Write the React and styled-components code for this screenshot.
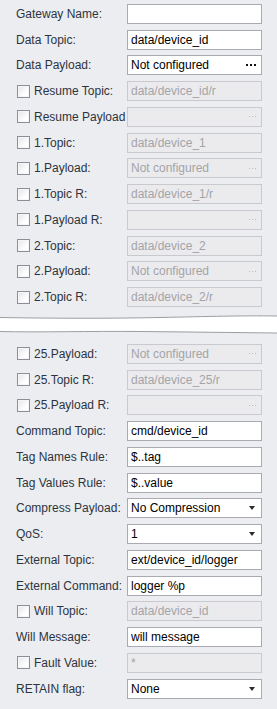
import React from "react";
import styled, { createGlobalStyle } from "styled-components";

const GlobalStyle = createGlobalStyle`
  html, body {
    margin: 0;
    padding: 0;
    background: #ecedf1;
  }
  body {
    font-family: "Liberation Sans", Arial, sans-serif;
    font-size: 12px;
  }
`;

const Page = styled.div`
  width: 277px;
  min-height: 709px;
  padding-top: 1px;
  box-sizing: border-box;
  background: #ecedf1;
`;

const Row = styled.div`
  display: grid;
  grid-template-columns: 127px 135px;
  align-items: center;
  height: 25.75px;
`;

const LabelCell = styled.label`
  display: flex;
  align-items: center;
  padding-left: ${(p) => (p.$check ? "17px" : "16px")};
  color: #2c3440;
  white-space: nowrap;
  overflow: hidden;
`;

const Checkbox = styled.span`
  width: 13px;
  height: 13px;
  box-sizing: border-box;
  margin-right: 4px;
  flex: none;
  border: 1px solid #8d8e98;
  background: linear-gradient(135deg, #e4e5ea 0%, #ffffff 70%);
  box-shadow: inset 0 0 0 1px #f6f6f8;
`;

const Field = styled.div`
  display: flex;
  align-items: center;
  height: 20px;
  box-sizing: border-box;
  padding: 0 3px;
  border: 1px solid ${(p) => (p.$disabled ? "#c9cacf" : "#a9aab2")};
  background: ${(p) => (p.$disabled ? "#ebebee" : "#ffffff")};
  color: ${(p) => (p.$disabled ? "#a3a4a8" : "#000000")};
  white-space: nowrap;
  overflow: hidden;
`;

const Value = styled.span`
  flex: 1;
  overflow: hidden;
`;

const Dots = styled.span`
  flex: none;
  display: flex;
  gap: ${(p) => (p.$disabled ? "2px" : "2px")};
  margin-right: 2px;
  align-self: center;

  i {
    display: block;
    width: ${(p) => (p.$disabled ? "1px" : "2px")};
    height: ${(p) => (p.$disabled ? "1px" : "2px")};
    background: ${(p) => (p.$disabled ? "#b9bac0" : "#111111")};
  }
`;

const Arrow = styled.span`
  flex: none;
  width: 0;
  height: 0;
  margin-right: 3px;
  border-left: 3.5px solid transparent;
  border-right: 3.5px solid transparent;
  border-top: 4px solid #2a2a33;
`;

const Break = styled.div`
  height: 31px;
  svg {
    display: block;
  }
`;

const topRows = [
  { label: "Gateway Name:", value: "" },
  { label: "Data Topic:", value: "data/device_id" },
  { label: "Data Payload:", value: "Not configured", dots: true },
  { label: "Resume Topic:", value: "data/device_id/r", check: true },
  { label: "Resume Payload", value: "", check: true, dots: true },
  { label: "1.Topic:", value: "data/device_1", check: true },
  { label: "1.Payload:", value: "Not configured", check: true, dots: true },
  { label: "1.Topic R:", value: "data/device_1/r", check: true },
  { label: "1.Payload R:", value: "", check: true, dots: true },
  { label: "2.Topic:", value: "data/device_2", check: true },
  { label: "2.Payload:", value: "Not configured", check: true, dots: true },
  { label: "2.Topic R:", value: "data/device_2/r", check: true },
];

const bottomRows = [
  { label: "25.Payload:", value: "Not configured", check: true, dots: true },
  { label: "25.Topic R:", value: "data/device_25/r", check: true },
  { label: "25.Payload R:", value: "", check: true, dots: true },
  { label: "Command Topic:", value: "cmd/device_id" },
  { label: "Tag Names Rule:", value: "$..tag" },
  { label: "Tag Values Rule:", value: "$..value" },
  { label: "Compress Payload:", value: "No Compression", select: true },
  { label: "QoS:", value: "1", select: true },
  { label: "External Topic:", value: "ext/device_id/logger" },
  { label: "External Command:", value: "logger %p" },
  { label: "Will Topic:", value: "data/device_id", check: true },
  { label: "Will Message:", value: "will message" },
  { label: "Fault Value:", value: "*", check: true },
  { label: "RETAIN flag:", value: "None", select: true },
];

const FormRow = ({ label, value, check, dots, select }) => {
  // rows with a checkbox are shown unchecked, so their field is disabled
  const disabled = !!check;
  return (
    <Row>
      <LabelCell $check={check}>
        {check && <Checkbox />}
        {label}
      </LabelCell>
      <Field $disabled={disabled}>
        <Value>{value}</Value>
        {dots && (
          <Dots $disabled={disabled}>
            <i />
            <i />
            <i />
          </Dots>
        )}
        {select && <Arrow />}
      </Field>
    </Row>
  );
};

const TornEdge = () => (
  <Break>
    <svg width="277" height="31" viewBox="0 0 277 31">
      <path
        d="M0 7.5 C60 8.5 110 8.5 160 7.5 S240 5.5 277 6 L277 23 C230 22.5 190 21 140 21.5 S40 22.5 0 21.5 Z"
        fill="#ffffff"
      />
      <path
        d="M0 7.5 C60 8.5 110 8.5 160 7.5 S240 5.5 277 6"
        fill="none"
        stroke="#9d9ea4"
        strokeWidth="1"
      />
      <path
        d="M0 21.5 C40 22.5 90 21 140 21.5 S230 22.5 277 23"
        fill="none"
        stroke="#9d9ea4"
        strokeWidth="1"
      />
    </svg>
  </Break>
);

const App = () => (
  <Page>
    <GlobalStyle />
    {topRows.map((r) => (
      <FormRow key={r.label} {...r} />
    ))}
    <TornEdge />
    {bottomRows.map((r) => (
      <FormRow key={r.label} {...r} />
    ))}
  </Page>
);

export default App;
